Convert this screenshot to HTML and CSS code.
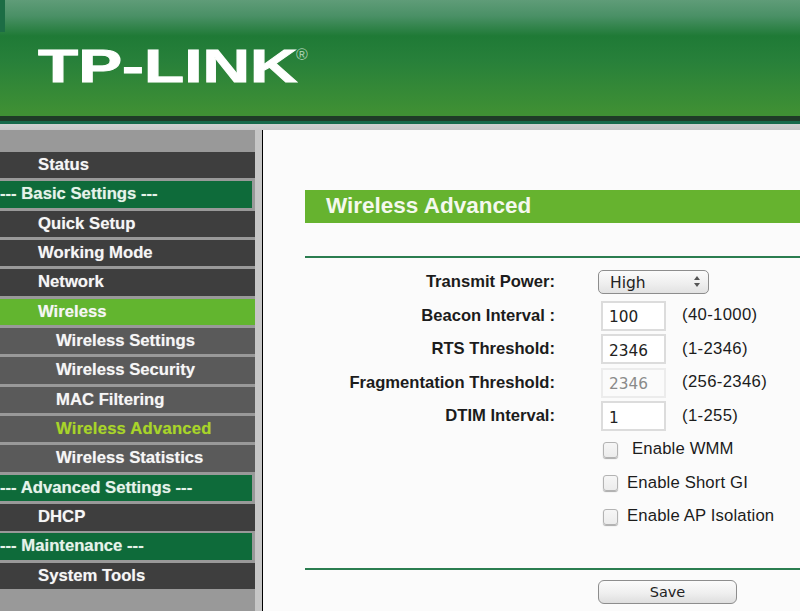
FILE: index.html
```html
<!DOCTYPE html>
<html lang="en">
<head>
<meta charset="utf-8">
<title>Wireless Advanced</title>
<link rel="stylesheet" href="styles.css">
</head>
<body>
<header class="banner">
  <span class="banner-notch"></span>
  <div class="logo"><span class="logo-word">TP-LINK</span><span class="logo-reg">®</span></div>
</header>
<div class="banner-edge"></div>
<div class="page">
  <nav class="menu">
    <a class="item">Status</a>
    <a class="item group">--- Basic Settings ---</a>
    <a class="item">Quick Setup</a>
    <a class="item">Working Mode</a>
    <a class="item">Network</a>
    <a class="item active">Wireless</a>
    <a class="item sub">Wireless Settings</a>
    <a class="item sub">Wireless Security</a>
    <a class="item sub">MAC Filtering</a>
    <a class="item sub current">Wireless Advanced</a>
    <a class="item sub">Wireless Statistics</a>
    <a class="item group">--- Advanced Settings ---</a>
    <a class="item">DHCP</a>
    <a class="item group">--- Maintenance ---</a>
    <a class="item">System Tools</a>
  </nav>
  <main class="content">
    <h1 class="title">Wireless Advanced</h1>
    <hr class="rule rule-top">
    <form class="form">
      <div class="row row-select">
        <label class="label">Transmit Power:</label>
        <div class="select-wrap">
          <select class="select"><option>High</option></select>
          <svg class="select-arrows" width="8" height="13" viewBox="0 0 8 13"><path d="M4 1 7 5H1zM4 12 1 8h6z" fill="#555"/></svg>
        </div>
      </div>
      <div class="row">
        <label class="label">Beacon Interval :</label>
        <input class="field" value="100">
        <span class="range">(40-1000)</span>
      </div>
      <div class="row">
        <label class="label">RTS Threshold:</label>
        <input class="field" value="2346">
        <span class="range">(1-2346)</span>
      </div>
      <div class="row">
        <label class="label">Fragmentation Threshold:</label>
        <input class="field field-off" value="2346" disabled>
        <span class="range">(256-2346)</span>
      </div>
      <div class="row">
        <label class="label">DTIM Interval:</label>
        <input class="field" value="1">
        <span class="range">(1-255)</span>
      </div>
      <div class="checks">
        <label class="check check-wide"><input type="checkbox" class="box"><span>Enable WMM</span></label>
        <label class="check"><input type="checkbox" class="box"><span>Enable Short GI</span></label>
        <label class="check"><input type="checkbox" class="box"><span>Enable AP Isolation</span></label>
      </div>
    </form>
    <hr class="rule rule-bottom">
    <div class="actions"><button type="button" class="save">Save</button></div>
  </main>
</div>
</body>
</html>
```
FILE: styles.css
```css
* { box-sizing: border-box; }
html, body { margin: 0; height: 611px; overflow: hidden; }
body { font-family: "Liberation Sans", Arial, sans-serif; background: #fbfbfb; color: #1c1c1c; }

.banner {
  position: relative;
  height: 116px;
  padding: 37px 0 0 38px;
  background: linear-gradient(#5f9c78 0, #4a9066 16px, #1f7a36 36px, #27803a 60px, #3f9034 112px);
}
.banner-notch { position: absolute; left: 0; top: 0; width: 5px; height: 32px; background: #1c6d45; }
.logo { display: flex; align-items: flex-start; color: #fff; }
.logo-word {
  display: inline-block;
  width: 178px;
  font-size: 46px;
  font-weight: 700;
  line-height: 58px;
  white-space: nowrap;
  transform: scaleX(1.43);
  transform-origin: 0 0;
  -webkit-text-stroke: 0.9px #fff;
}
.logo-reg { margin: 10px 0 0 80px; font-size: 16px; line-height: 16px; color: #a6cdb0; }
.banner-edge {
  height: 14px;
  background: linear-gradient(#1f3b27 0, #1f3b27 5px, #17694a 5px, #17694a 8px, #cfcfcf 8px, #c6c6c6 14px);
}

.page { display: flex; height: 481px; }
.menu {
  display: flex;
  flex-direction: column;
  gap: 2.96px;
  flex: none;
  width: 263px;
  padding: 22px 7px 0 0;
  background: #999;
  border-right: 1px solid #000;
  box-shadow: inset -7px 0 0 #c6c6c6;
  font-size: 16.7px;
  font-weight: 700;
  color: #f6f6f6;
}
.item {
  display: block;
  height: 26.4px;
  padding-left: 38px;
  line-height: 25px;
  white-space: nowrap;
  background: #3e3e3e;
  text-shadow: 0 0 1px rgba(255, 255, 255, 0.45);
}
.item.group { margin-right: 3px; padding-left: 0; background: #0e6b3a; color: #e6f3ea; }
.item.active { background: #62b52f; }
.item.sub { padding-left: 56px; background: #5a5a5a; }
.item.current { color: #a8d52a; text-shadow: 0 0 1px rgba(168, 213, 42, 0.5); letter-spacing: 0.2px; }

.content { flex: 1; min-width: 0; padding: 60px 0 0 42px; }
.title {
  height: 33px;
  margin: 0;
  padding-left: 21px;
  font-size: 22.5px;
  font-weight: 700;
  line-height: 31px;
  color: #f4f8ee;
  background: #66b32f;
}
.rule { height: 2px; margin: 0; border: 0; background: #2b7d50; }
.rule-top { margin-top: 33px; }
.rule-bottom { margin-top: 33px; }

.form { display: flex; flex-direction: column; padding-top: 12px; font-size: 16.7px; }
.row { display: flex; align-items: center; height: 33.5px; }
.row-select { height: 24px; margin-bottom: 5px; }
.label { flex: none; width: 250px; font-weight: 700; font-size: 16.6px; text-align: right; white-space: nowrap; }
.select-wrap { position: relative; margin-left: 43px; }
.select {
  display: block;
  width: 111px;
  height: 24px;
  padding: 1px 0 0 11px;
  border: 1px solid #8d8d8d;
  border-radius: 5px;
  appearance: none;
  background: linear-gradient(#fbfbfb, #efefef 55%, #e2e2e2);
  font: 15.5px "DejaVu Sans", sans-serif;
  color: #222;
}
.select-arrows { position: absolute; right: 8px; top: 5px; pointer-events: none; }
.field {
  flex: none;
  width: 65px;
  height: 30px;
  margin-left: 46px;
  padding: 3px 0 0 6px;
  border: 2px solid #dcdcdc;
  background: #fff;
  font: 15.3px "DejaVu Sans", sans-serif;
  color: #222;
}
.field-off { border-color: #ececec; color: #8a8a8a; background: #fbfbfb; }
.range { margin: -1px 0 0 16px; letter-spacing: 0.35px; }

.checks { display: flex; flex-direction: column; padding: 1px 0 0 298px; }
.check { display: flex; align-items: center; height: 33.5px; letter-spacing: 0.15px; }
.box {
  flex: none;
  width: 15px;
  height: 16px;
  margin: -2px 9px 0 0;
  border: 1px solid #b3b3b3;
  border-radius: 3px;
  appearance: none;
  background: linear-gradient(#f6f6f6, #ececec);
  box-shadow: 0 1px 1px #aaa;
}
.check-wide .box { margin-right: 14px; }
.check span { margin-top: -3px; }

.actions { padding: 10px 0 0 293px; }
.save {
  display: block;
  width: 139px;
  height: 24px;
  padding: 1px 0 0;
  border: 1px solid #8d8d8d;
  border-radius: 6px;
  background: linear-gradient(#fbfbfb, #efefef 55%, #dedede);
  font: 14.5px "DejaVu Sans", sans-serif;
  color: #222;
}
```
